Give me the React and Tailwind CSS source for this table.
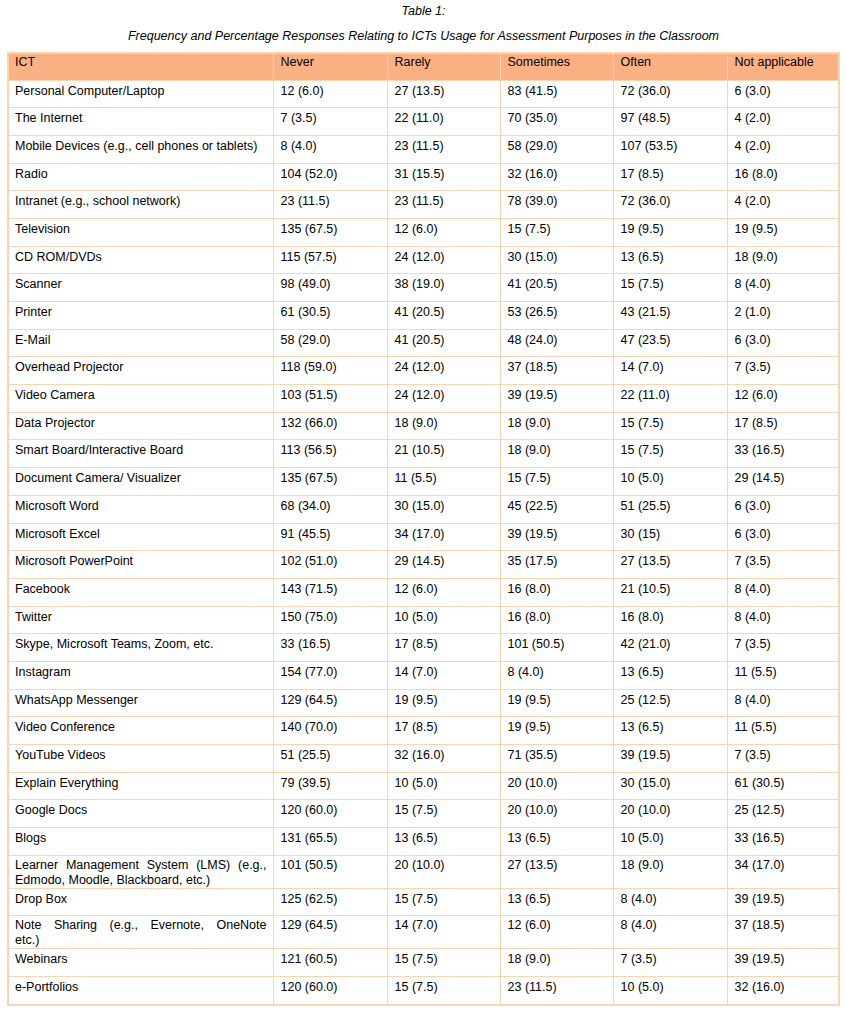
import React from "react";

const rows = [
  ["Personal Computer/Laptop", "12 (6.0)", "27 (13.5)", "83 (41.5)", "72 (36.0)", "6 (3.0)"],
  ["The Internet", "7 (3.5)", "22 (11.0)", "70 (35.0)", "97 (48.5)", "4 (2.0)"],
  ["Mobile Devices (e.g., cell phones or tablets)", "8 (4.0)", "23 (11.5)", "58 (29.0)", "107 (53.5)", "4 (2.0)"],
  ["Radio", "104 (52.0)", "31 (15.5)", "32 (16.0)", "17 (8.5)", "16 (8.0)"],
  ["Intranet (e.g., school network)", "23 (11.5)", "23 (11.5)", "78 (39.0)", "72 (36.0)", "4 (2.0)"],
  ["Television", "135 (67.5)", "12 (6.0)", "15 (7.5)", "19 (9.5)", "19 (9.5)"],
  ["CD ROM/DVDs", "115 (57.5)", "24 (12.0)", "30 (15.0)", "13 (6.5)", "18 (9.0)"],
  ["Scanner", "98 (49.0)", "38 (19.0)", "41 (20.5)", "15 (7.5)", "8 (4.0)"],
  ["Printer", "61 (30.5)", "41 (20.5)", "53 (26.5)", "43 (21.5)", "2 (1.0)"],
  ["E-Mail", "58 (29.0)", "41 (20.5)", "48 (24.0)", "47 (23.5)", "6 (3.0)"],
  ["Overhead Projector", "118 (59.0)", "24 (12.0)", "37 (18.5)", "14 (7.0)", "7 (3.5)"],
  ["Video Camera", "103 (51.5)", "24 (12.0)", "39 (19.5)", "22 (11.0)", "12 (6.0)"],
  ["Data Projector", "132 (66.0)", "18 (9.0)", "18 (9.0)", "15 (7.5)", "17 (8.5)"],
  ["Smart Board/Interactive Board", "113 (56.5)", "21 (10.5)", "18 (9.0)", "15 (7.5)", "33 (16.5)"],
  ["Document Camera/ Visualizer", "135 (67.5)", "11 (5.5)", "15 (7.5)", "10 (5.0)", "29 (14.5)"],
  ["Microsoft Word", "68 (34.0)", "30 (15.0)", "45 (22.5)", "51 (25.5)", "6 (3.0)"],
  ["Microsoft Excel", "91 (45.5)", "34 (17.0)", "39 (19.5)", "30 (15)", "6 (3.0)"],
  ["Microsoft PowerPoint", "102 (51.0)", "29 (14.5)", "35 (17.5)", "27 (13.5)", "7 (3.5)"],
  ["Facebook", "143 (71.5)", "12 (6.0)", "16 (8.0)", "21 (10.5)", "8 (4.0)"],
  ["Twitter", "150 (75.0)", "10 (5.0)", "16 (8.0)", "16 (8.0)", "8 (4.0)"],
  ["Skype, Microsoft Teams, Zoom, etc.", "33 (16.5)", "17 (8.5)", "101 (50.5)", "42 (21.0)", "7 (3.5)"],
  ["Instagram", "154 (77.0)", "14 (7.0)", "8 (4.0)", "13 (6.5)", "11 (5.5)"],
  ["WhatsApp Messenger", "129 (64.5)", "19 (9.5)", "19 (9.5)", "25 (12.5)", "8 (4.0)"],
  ["Video Conference", "140 (70.0)", "17 (8.5)", "19 (9.5)", "13 (6.5)", "11 (5.5)"],
  ["YouTube Videos", "51 (25.5)", "32 (16.0)", "71 (35.5)", "39 (19.5)", "7 (3.5)"],
  ["Explain Everything", "79 (39.5)", "10 (5.0)", "20 (10.0)", "30 (15.0)", "61 (30.5)"],
  ["Google Docs", "120 (60.0)", "15 (7.5)", "20 (10.0)", "20 (10.0)", "25 (12.5)"],
  ["Blogs", "131 (65.5)", "13 (6.5)", "13 (6.5)", "10 (5.0)", "33 (16.5)"],
  [["Learner Management System (LMS) (e.g.,", "Edmodo, Moodle, Blackboard, etc.)"], "101 (50.5)", "20 (10.0)", "27 (13.5)", "18 (9.0)", "34 (17.0)"],
  ["Drop Box", "125 (62.5)", "15 (7.5)", "13 (6.5)", "8 (4.0)", "39 (19.5)"],
  [["Note Sharing (e.g., Evernote, OneNote", "etc.)"], "129 (64.5)", "14 (7.0)", "12 (6.0)", "8 (4.0)", "37 (18.5)"],
  ["Webinars", "121 (60.5)", "15 (7.5)", "18 (9.0)", "7 (3.5)", "39 (19.5)"],
  ["e-Portfolios", "120 (60.0)", "15 (7.5)", "23 (11.5)", "10 (5.0)", "32 (16.0)"],
];

const heads = ["ICT", "Never", "Rarely", "Sometimes", "Often", "Not applicable"];

export default function App() {
  return (
    <div className="min-h-screen bg-white text-black font-['Liberation_Sans',Arial,sans-serif] pt-[4px]">
      {/* caption */}
      <p className="text-center italic text-[12.5px] leading-[15px]">Table 1:</p>
      <p className="text-center italic text-[12.5px] leading-[15px] mt-[10px]">
        Frequency and Percentage Responses Relating to ICTs Usage for Assessment Purposes in the Classroom
      </p>

      <div className="mx-[7px] mt-[8px] border-2 border-[#fbd4b4]">
        <table className="w-full table-fixed border-collapse text-[12.5px] leading-[15px]">
          <colgroup>
            <col className="w-[264px]" />
            <col className="w-[114px]" />
            <col className="w-[113px]" />
            <col className="w-[113px]" />
            <col className="w-[114px]" />
            <col />
          </colgroup>
          <thead>
            <tr className="h-[26px] bg-[#fcb185]">
              {heads.map((h, i) => (
                <th
                  key={h}
                  className={
                    "align-top text-left font-normal pt-[1px] border-[#fbd4b4] " +
                    (i === 0 ? "pl-[6px]" : "pl-[7px] border-l")
                  }
                >
                  {h}
                </th>
              ))}
            </tr>
          </thead>
          <tbody>
            {rows.map((r) => {
              const twoLine = Array.isArray(r[0]);
              const pad = twoLine ? "pt-[2px]" : "pt-[3px]";
              return (
                <tr key={twoLine ? r[0][0] : r[0]} className={twoLine ? "h-[32px]" : "h-[27.7px]"}>
                  <td className={"align-top text-justify pl-[6px] pr-[6px] border-t border-[#fbd4b4] " + pad}>
                    {twoLine ? (
                      <>
                        <span className="block [text-align-last:justify]">{r[0][0]}</span>
                        <span className="block">{r[0][1]}</span>
                      </>
                    ) : (
                      r[0]
                    )}
                  </td>
                  {r.slice(1, 6).map((v, j) => (
                    <td key={j} className={"align-top pl-[7px] border-t border-l border-[#fbd4b4] " + pad}>
                      {v}
                    </td>
                  ))}
                </tr>
              );
            })}
          </tbody>
        </table>
      </div>
    </div>
  );
}
